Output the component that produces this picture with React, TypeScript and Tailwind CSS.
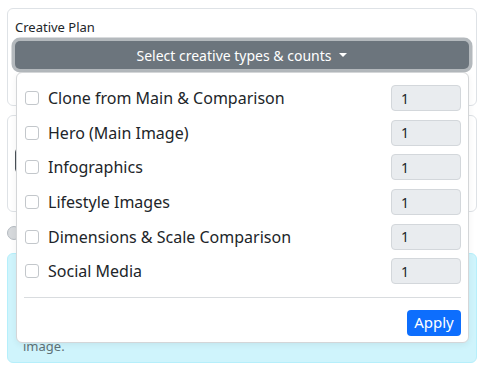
import React from "react";

const items = [
  "Clone from Main & Comparison",
  "Hero (Main Image)",
  "Infographics",
  "Lifestyle Images",
  "Dimensions & Scale Comparison",
  "Social Media",
];

export default function App() {
  return (
    <div
      className="relative min-h-[365px] bg-white px-[7px] pt-[8px] text-[#212529]"
      style={{ fontFamily: '"Noto Sans", "Open Sans", sans-serif' }}
    >
      {/* creative plan card */}
      <div className="h-[98px] rounded-md border border-[#dee2e6] px-[7px] pt-[8px]">
        <div className="text-[13px] leading-[20px]">Creative Plan</div>
        <button className="mt-[4px] flex h-[28px] w-full items-center justify-center gap-2 rounded-[5px] bg-[#6c757d] text-[14px] text-white shadow-[0_0_0_3.5px_rgba(130,138,145,0.6)]">
          Select creative types &amp; counts
          <span className="h-0 w-0 border-x-[4px] border-t-[4.5px] border-x-transparent border-t-white" />
        </button>
      </div>

      {/* second card, mostly hidden */}
      <div className="mt-[9px] h-[97px] rounded-md border border-[#dee2e6] px-[7px] pt-[32px]">
        <div className="h-[25px] rounded-[4px] border border-[#495057]" />
      </div>

      <div className="mt-[13px] flex h-[15px] items-center">
        <span className="h-[14px] w-[14px] rounded-full border border-[#b5bbc1] bg-[#d6d9dc]" />
      </div>

      {/* info alert */}
      <div className="mt-[13px] flex h-[110px] flex-col justify-end rounded-md border border-[#b6effb] bg-[#cff4fc] px-[15px] pb-[7px]">
        <p className="text-[13px] leading-[18px] text-[#5f7177]">
          Select the creative types to generate from the main product
        </p>
        <p className="text-[13px] leading-[18px] text-[#5f7177]">image.</p>
      </div>

      {/* dropdown menu */}
      <div className="absolute left-[16px] top-[72px] w-[453px] rounded-md border border-[#d4d6d8] bg-white pb-[6px] pt-[8px] shadow-[0_2px_6px_rgba(0,0,0,0.06)]">
        {items.map((label) => (
          <div key={label} className="flex h-[34.6px] items-center pl-[8px] pr-[7px]">
            <span className="h-[14px] w-[14px] shrink-0 rounded-[3px] border border-[#c3c7cb] bg-white" />
            <span className="ml-[9px] flex-1 text-[16px] leading-none">{label}</span>
            <div className="flex h-[26px] w-[70px] items-center rounded-[4px] border border-[#d3d7db] bg-[#e9ecef] pl-[9px] text-[14px]">
              1
            </div>
          </div>
        ))}
        <div className="mx-[7px] mt-[8px] border-t border-[#d9dcdf]" />
        <div className="mt-[12px] flex justify-end pr-[7px]">
          <button className="h-[26px] w-[54px] rounded-[4px] bg-[#0d6efd] text-[15px] text-white">
            Apply
          </button>
        </div>
      </div>
    </div>
  );
}
